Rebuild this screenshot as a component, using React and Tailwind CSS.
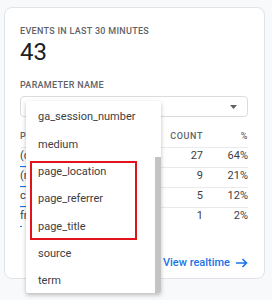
const rows = [
  { label: '(direct)', count: 27, pct: 64 },
  { label: '(none)', count: 9, pct: 21 },
  { label: 'cpc', count: 5, pct: 12 },
  { label: 'free', count: 1, pct: 2 },
]

const options = ['ga_session_number', 'medium', 'page_location', 'page_referrer', 'page_title', 'source', 'term']

export default function App() {
  return (
    <div className="w-[272px] h-[300px] bg-[#f8f9fa] pt-[7px] pl-[4px] overflow-hidden" style={{ fontFamily: 'Roboto, "Liberation Sans", sans-serif' }}>
      <div className="w-[261px] h-[272px] bg-white border border-[#e0e3e7] rounded-[8px] pl-[15px] pr-[16px] pt-[17px]">
        <div className="text-[9px] leading-[12px] font-medium tracking-[0.3px] text-[#5f6368]">EVENTS IN LAST 30 MINUTES</div>
        <div className="text-[24px] leading-[28px] text-[#202124] mt-[1px]">43</div>

        <div className="mt-[13px] text-[9px] leading-[12px] font-medium tracking-[0.3px] text-[#5f6368]">PARAMETER NAME</div>

        {/* select + open menu */}
        <div className="relative mt-[5px]">
          <div className="h-[21px] border border-[#dadce0] rounded-[4px] flex items-center justify-end pr-[10px]">
            <svg width="7" height="4" viewBox="0 0 7 4"><path d="M0 0h7L3.5 4z" fill="#5f6368" /></svg>
          </div>

          <div className="absolute left-[6px] top-[5px] z-10 w-[135px] h-[192px] bg-white rounded-[2px] shadow-[0_2px_4px_rgba(0,0,0,0.25)] flex overflow-hidden">
            <div className="flex-1 pt-[3px]">
              {options.map(o => (
                <div key={o} className="h-[27.3px] flex items-center pl-[12px] text-[11px] text-[#3c4043]">{o}</div>
              ))}
            </div>
            <div className="w-[6px] flex flex-col">
              <div className="mt-[56px] flex-1 bg-[#c4c4c4]" />
            </div>
            <div className="absolute left-[4px] top-[60px] w-[107px] h-[79px] border-2 border-[#e3131b]" />
          </div>
        </div>

        {/* table */}
        <div className="mt-[10px] h-[20px] flex items-center text-[9px] font-medium tracking-[0.6px] text-[#5f6368]">
          <div className="flex-1">PARAMETER VALUE</div>
          <div className="w-[60px] text-right">COUNT</div>
          <div className="w-[45px] text-right">%</div>
        </div>
        {rows.map(r => (
          <div key={r.label} className="h-[20px] flex text-[11px] text-[#3c4043] border-t border-[#e8eaed]">
            <div className="flex-1 flex flex-col pt-[2px]">
              <div className="leading-[12px] h-[12px]">{r.label}</div>
              <div className="mt-[4px] h-[2px] bg-[#1a73e8]" style={{ width: `${r.pct}%` }} />
            </div>
            <div className="w-[60px] text-right pt-[2px] leading-[12px]">{r.count}</div>
            <div className="w-[45px] text-right pt-[2px] leading-[12px]">{r.pct}%</div>
          </div>
        ))}

        <div className="mt-[28px] flex justify-end items-center gap-[6px] text-[11px] font-medium text-[#1a73e8]">
          <span>View realtime</span>
          <svg width="12" height="10" viewBox="0 0 12 10" fill="none" stroke="#1a73e8" strokeWidth="1.6">
            <path d="M0 5h10.5M6.5 1l4 4-4 4" />
          </svg>
        </div>
      </div>
    </div>
  )
}
